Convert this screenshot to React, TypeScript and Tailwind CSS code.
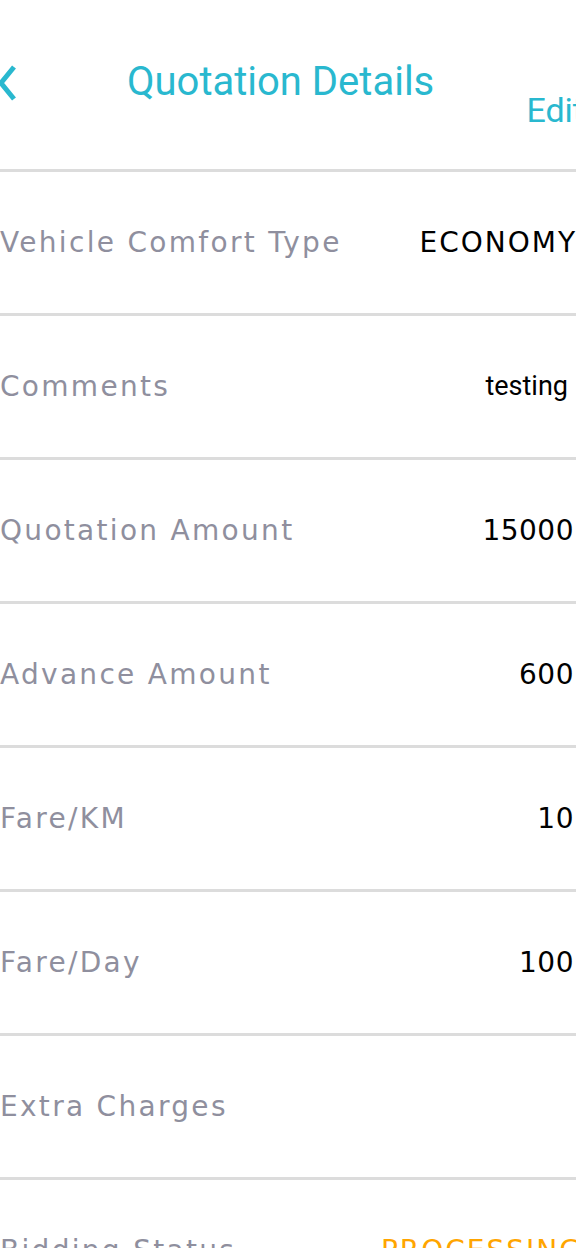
const rows: { label: string; value: string; kind: 'text' | 'num' | 'plain' | 'status' }[] = [
  { label: 'Vehicle Comfort Type', value: 'ECONOMY', kind: 'text' },
  { label: 'Comments', value: 'testing', kind: 'plain' },
  { label: 'Quotation Amount', value: '15000', kind: 'num' },
  { label: 'Advance Amount', value: '600', kind: 'num' },
  { label: 'Fare/KM', value: '10', kind: 'num' },
  { label: 'Fare/Day', value: '100', kind: 'num' },
  { label: 'Extra Charges', value: '', kind: 'num' },
  { label: 'Bidding Status', value: 'PROCESSING', kind: 'status' },
]

function Value({ value, kind }: { value: string; kind: string }) {
  if (kind === 'plain')
    return <span className="mr-[8px] font-['Roboto',sans-serif] text-[27px] text-black">{value}</span>
  if (kind === 'status')
    return <span className="-mr-[7px] text-[28px] tracking-[2px] text-[#ffa500] whitespace-nowrap">{value}</span>
  if (kind === 'text')
    return <span className="-mr-[1px] text-[28px] tracking-[2px] text-black whitespace-nowrap">{value}</span>
  return <span className="mr-[2px] text-[28px] tracking-[0.5px] text-black whitespace-nowrap">{value}</span>
}

export default function App() {
  return (
    <div className="w-[576px] h-[1248px] overflow-hidden bg-white">
      {/* header */}
      <div className="flex h-[169px] items-start font-['Roboto',sans-serif]">
        <svg width="20" height="38" viewBox="0 0 20 38" className="mt-[64px] -ml-[4px] shrink-0">
          <path d="M18 3 L5 19 L18 35" fill="none" stroke="#29b8cf" strokeWidth="5" />
        </svg>
        <h1 className="ml-[111px] mt-[56px] text-[40px] leading-[52px] text-[#29b8cf] whitespace-nowrap">
          Quotation Details
        </h1>
        <button className="ml-auto -mr-[8px] mt-[90px] text-[34px] leading-[40px] text-[#29b8cf]">Edit</button>
      </div>

      {rows.map((r) => (
        <div
          key={r.label}
          className="flex h-[144px] items-center justify-between border-t-[3px] border-[#dcdcdc] font-['DejaVu_Sans',sans-serif]"
        >
          <span className="text-[28px] tracking-[2.3px] text-[#8f8f9e] whitespace-nowrap">{r.label}</span>
          <Value value={r.value} kind={r.kind} />
        </div>
      ))}
    </div>
  )
}
